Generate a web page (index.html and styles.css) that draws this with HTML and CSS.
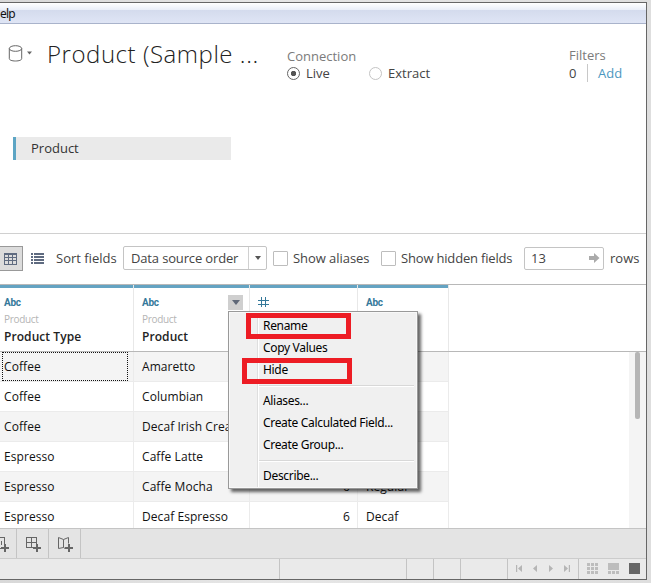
FILE: index.html
```html
<!DOCTYPE html>
<html lang="en">
<head>
<meta charset="utf-8">
<title>Data Source</title>
<link rel="stylesheet" href="styles.css">
</head>
<body>
<div class="window">
  <div class="menubar"><span class="menubar-item">elp</span></div>

  <header class="source">
    <div class="source-top">
      <svg class="db" width="26" height="20" viewBox="0 0 26 20" fill="none" stroke="#666"><ellipse cx="7.5" cy="4.5" rx="6.2" ry="2.8"/><path d="M1.3 4.5v10.200c0 1.300 2.500 2.300 6.200 2.300s6.200-1 6.200-2.300V4.500"/><path d="M19 7.500h5l-2.500 3z" fill="#666" stroke="none"/></svg>
      <h1 class="title">Product (Sample ...</h1>
      <div class="connection">
        <div class="label">Connection</div>
        <div class="radios">
          <span class="radio on"></span><span class="live">Live</span>
          <span class="radio"></span><span class="extract">Extract</span>
        </div>
      </div>
      <div class="filters">
        <div class="label">Filters</div>
        <div class="filter-line"><span class="count">0</span><a class="add">Add</a></div>
      </div>
    </div>
    <div class="table-pill">Product</div>
  </header>

  <div class="toolbar">
    <span class="grid-btn"><svg width="13" height="12" viewBox="0 0 13 12" fill="none" stroke="#5f6b80" shape-rendering="crispEdges"><path d="M.5.5h12v10.500H.5zM0 4.500h13M0 7.500h13M4.500 1v10M8.500 1v10M0 1.500h13"/></svg></span>
    <svg class="list-icon" width="13" height="12" viewBox="0 0 13 12" fill="#5f6b80" shape-rendering="crispEdges"><path d="M0 0h2v2H0zM3 0h10v2H3zM0 3h2v2H0zM3 3h10v2H3zM0 6h2v2H0zM3 6h10v2H3zM0 9h2v2H0zM3 9h10v2H3z"/></svg>
    <span class="sort">Sort fields</span>
    <span class="select"><span class="select-text">Data source order</span><span class="select-arrow"><i class="tri"></i></span></span>
    <span class="check"></span><span class="aliases">Show aliases</span>
    <span class="check"></span><span class="hidden-fields">Show hidden fields</span>
    <span class="rows-input"><span>13</span><svg width="11" height="10" viewBox="0 0 11 10" fill="#aaa"><path d="M0 3h5V0l5.500 5L5 10V7H0z"/></svg></span>
    <span class="rows-label">rows</span>
  </div>

  <div class="data">
    <div class="head">
      <div class="col c1"><div class="type">Abc</div><div class="table-name">Product</div><div class="field">Product Type</div></div>
      <div class="col c2"><div class="type">Abc</div><span class="col-menu"><i class="tri"></i></span><div class="table-name">Product</div><div class="field">Product</div></div>
      <div class="col c3"><svg class="hash" width="11" height="11" viewBox="0 0 11 11" stroke="#35799a" shape-rendering="crispEdges"><path d="M3.500 0v10M7.500 0v10M0 3.500h11M0 7.500h11"/></svg></div>
      <div class="col c4"><div class="type">Abc</div></div>
    </div>
    <div class="body">
      <div class="rows">
        <div class="row odd"><div class="cell c1 selected">Coffee</div><div class="cell c2">Amaretto</div><div class="cell c3"></div><div class="cell c4"></div></div>
        <div class="row"><div class="cell c1">Coffee</div><div class="cell c2">Columbian</div><div class="cell c3"></div><div class="cell c4"></div></div>
        <div class="row odd"><div class="cell c1">Coffee</div><div class="cell c2">Decaf Irish Cream</div><div class="cell c3"></div><div class="cell c4"></div></div>
        <div class="row"><div class="cell c1">Espresso</div><div class="cell c2">Caffe Latte</div><div class="cell c3"></div><div class="cell c4"></div></div>
        <div class="row odd"><div class="cell c1">Espresso</div><div class="cell c2">Caffe Mocha</div><div class="cell c3">6</div><div class="cell c4">Regular</div></div>
        <div class="row"><div class="cell c1">Espresso</div><div class="cell c2">Decaf Espresso</div><div class="cell c3">6</div><div class="cell c4">Decaf</div></div>
      </div>
      <div class="scroll"><div class="thumb"></div></div>
    </div>
  </div>

  <div class="tabs">
    <span class="tab first"><svg width="9" height="17" viewBox="7 0 9 17" fill="none" stroke="#666" shape-rendering="crispEdges"><path d="M6 1.500h5.500V8M6 12.500h2M8.500 5v4"/><path d="M8 12h8M12 8v8" stroke-width="2"/></svg></span>
    <span class="tab"><svg width="16" height="17" viewBox="0 0 16 17" fill="none" stroke="#666" shape-rendering="crispEdges"><path d="M7 11.500H.5v-10h10V8M0 6.500h11M5.500 1v11"/><path d="M7 12h8M11 8v8" stroke-width="2"/></svg></span>
    <span class="tab"><svg width="16" height="17" viewBox="0 0 16 17" fill="none" stroke="#666"><path d="M7 12.500l-1.500-1-5 1v-11l5 2 5-2V7.500M5.500 3.500v8"/><path d="M7 12h8M11 8v8" stroke-width="2"/></svg></span>
  </div>

  <div class="status">
    <span class="seg s1"></span><span class="seg s2"></span><span class="seg s3"></span><span class="seg s4"></span>
    <span class="nav"><svg width="55" height="9" viewBox="0 0 55 9" fill="#b5b5b5"><path d="M0 1h1.200v7H0zM6 1v7L2 4.500zM21 1v7l-4-3.500zM33 1v7l4-3.500zM48 1v7l4-3.500zM52.800 1h1.200v7h-1.200z"/></svg></span>
    <span class="views"><svg width="54" height="12" viewBox="0 0 54 12" fill="#bdbdbd" shape-rendering="crispEdges"><path d="M0 0h3v3H0zM4 0h3v3H4zM8 0h3v3H8zM0 4h3v3H0zM4 4h3v3H4zM8 4h3v3H8zM0 8h3v3H0zM4 8h3v3H4zM8 8h3v3H8zM21 0h11v7H21zM21 8h3v3h-3zM25 8h3v3h-3zM29 8h3v3h-3z"/><path fill="#666" d="M42 0h11v11H42z"/></svg></span>
  </div>
</div>

<div class="context-menu">
  <div class="item">Rename</div>
  <div class="item">Copy Values</div>
  <div class="item">Hide</div>
  <div class="sep"></div>
  <div class="item">Aliases...</div>
  <div class="item">Create Calculated Field...</div>
  <div class="item">Create Group...</div>
  <div class="sep"></div>
  <div class="item">Describe...</div>
</div>
<div class="mark mark-rename"></div>
<div class="mark mark-hide"></div>
</body>
</html>
```
FILE: styles.css
```css
*, *::before, *::after { box-sizing: border-box; }
body {
  margin: 0; width: 651px; height: 583px; overflow: hidden; position: relative;
  background: linear-gradient(90deg, #d8d8d8, #e6e6e6 40%, #dedede);
  font-family: "Open Sans", "Noto Sans", sans-serif; font-size: 13px; color: #444;
  padding-top: 2px; white-space: nowrap;
}
.window { width: 647px; height: 578px; border: 1px solid #666; border-left: 0; background: #fff; display: flex; flex-direction: column; }
.menubar { height: 21px; flex: none; border-bottom: 1px solid #a9b3cb; background: linear-gradient(#fff, #e9eef8 7px, #d4dbed 7px, #dfe5f5 20px); color: #111; font: 12px/22px "Noto Sans", sans-serif; letter-spacing: -.8px; }

.source { height: 210px; flex: none; border-bottom: 1px solid #d0d0d0; }
.source-top { display: flex; height: 113px; }
.db { margin: 20px 0 0 8px; flex: none; }
.title { margin: 10px 0 0 13px; width: 240px; font-size: 24px; line-height: 40px; font-weight: 300; color: #222; letter-spacing: .54px; }
.connection { margin-top: 23px; width: 282px; }
.label { line-height: 18px; color: #7b7b7b; }
.radios { display: flex; align-items: center; height: 16px; }
.radio { width: 13px; height: 13px; border: 1px solid #c4c4c4; border-radius: 50%; flex: none; }
.radio.on { border-color: #666; background: radial-gradient(circle, #555 2.4px, transparent 3px); }
.live { width: 63px; margin-left: 6px; }
.extract { margin-left: 6px; }
.filters { margin-top: 22px; }
.filter-line { display: flex; height: 18px; line-height: 18px; }
.count { width: 19px; border-right: 1px solid #c8c8c8; }
.add { margin-left: 10px; color: #4b97c0; }
.table-pill { margin-left: 13px; width: 218px; height: 23px; border-left: 3px solid #5da5c4; background: #eaeaea; padding-left: 15px; line-height: 22px; color: #333; }

.toolbar { height: 51px; flex: none; border-bottom: 1px solid #b8b8b8; display: flex; align-items: center; padding-bottom: 1px; line-height: 18px; }
.grid-btn { width: 23px; height: 25px; border: 1px solid #999; border-left: 0; background: #dcdcdc; display: flex; align-items: center; padding-left: 4px; }
.list-icon { margin-left: 8px; }
.sort { margin: -2px 0 0 12px; width: 67px; }
.select { width: 144px; height: 24px; border: 1px solid #c4c4c4; border-radius: 2px; display: flex; line-height: 22px; letter-spacing: -.15px; margin-top: -1px; }
.select-text { width: 124px; padding-left: 7px; }
.select-arrow { flex: 1; border-left: 1px solid #d0d0d0; display: flex; align-items: center; justify-content: center; }
.tri { border: 4px solid transparent; border-top: 5px solid #5f6878; border-bottom: 0; }
.select .tri { border-width: 4px 3.5px 0; border-top-color: #555; }
.check { width: 15px; height: 15px; margin-left: 6px; border: 1px solid #bdbdbd; border-radius: 1px; }
.aliases { margin: -2px 0 0 5px; width: 82px; letter-spacing: -.05px; }
.hidden-fields { margin: -2px 0 0 5px; width: 123px; letter-spacing: -.18px; }
.rows-input { width: 80px; height: 23px; border: 1px solid #c4c4c4; border-radius: 2px; display: flex; justify-content: space-between; align-items: center; padding: 0 3px 1px 6px; }
.rows-label { margin: -2px 0 0 6px; }

.data { flex: 1; min-height: 0; display: flex; flex-direction: column; }
.head { height: 67px; flex: none; border-bottom: 1px solid #b8b8b8; display: flex; }
.col { border-top: 3px solid #64a3c2; position: relative; padding: 8px 0 0 8px; flex: none; }
.col::after { content: ""; position: absolute; right: 0; top: -3px; bottom: 0; width: 1px; background: #e8e8e8; }
.c1 { width: 134px; }
.c2 { width: 116px; }
.c3 { width: 108px; }
.c4 { width: 91px; }
.col.c1 { padding-left: 4px; }
.type { font: bold 10px/13px Roboto, sans-serif; color: #35799a; letter-spacing: -.3px; }
.table-name { font-size: 10px; line-height: 14px; margin-top: 3px; color: #b5b5b5; letter-spacing: -.3px; }
.field { font-size: 12px; line-height: 17px; margin-top: 2px; font-weight: 600; color: #222; letter-spacing: .07px; }
.col-menu { position: absolute; right: 7px; top: 7px; width: 15px; height: 15px; background: #cfcfcf; display: flex; align-items: center; justify-content: center; }
.hash { display: block; margin-top: 1px; }
.body { flex: 1; min-height: 0; overflow: hidden; display: flex; justify-content: space-between; }
.row { display: flex; height: 30px; }
.odd { background: #f4f4f4; }
.cell { border-right: 1px solid #ebebeb; border-bottom: 1px solid #ebebeb; padding-left: 8px; font-size: 12px; line-height: 30px; color: #111; letter-spacing: .07px; overflow: hidden; flex: none; }
.cell.c1 { padding-left: 4px; position: relative; }
.cell.c3 { text-align: right; padding-right: 7px; }
.selected::after { content: ""; position: absolute; left: 2px; top: 0; width: 126px; height: 29px; border: 1px dotted #111; }
.scroll { width: 17px; background: #f4f4f4; padding: 0 0 0 6px; }
.thumb { width: 5px; height: 67px; background: #b5b5b5; border-radius: 2px; }

.tabs { height: 31px; flex: none; border-top: 1px solid #c4c4c4; border-bottom: 1px solid #ccc; background: #e4e4e4; display: flex; }
.tab { width: 32px; border-right: 1px solid #c4c4c4; padding: 7px 0 0 9px; }
.tab.first { width: 17px; padding-left: 0; }
.status { height: 20px; flex: none; background: #eaeaea; display: flex; }
.seg { border-right: 1px solid #c4c4c4; }
.s1 { width: 280px; }
.s2 { width: 127px; }
.s3, .s4 { width: 27px; }
.nav { width: 72px; margin-left: 46px; border: solid #c4c4c4; border-width: 0 1px; padding: 5px 0 0 8px; line-height: 0; }
.views { padding: 4px 0 0 8px; line-height: 0; }

.context-menu { position: absolute; left: 228px; top: 311px; width: 190px; height: 178px; border: 1px solid #999; background: linear-gradient(90deg, transparent 28px, #dedede 28px, #dedede 29px, #fff 29px, #fff 30px, transparent 30px), #f0f0f0; box-shadow: 3px 3px 3px rgba(0,0,0,.6), inset 0 0 0 1px #f8f8f8; padding-top: 3px; font: 12px/22px "Noto Sans", sans-serif; color: #000; letter-spacing: -.32px; }
.item { height: 22px; padding-left: 34px; }
.sep { height: 1px; margin: 4px 3px 4px 30px; background: #d8d8d8; box-shadow: 0 1px #fff; }
.mark { position: absolute; border: 5px solid #ed1c24; }
.mark-rename { left: 246px; top: 313px; width: 105px; height: 26px; }
.mark-hide { left: 242px; top: 358px; width: 110px; height: 26px; }
```
